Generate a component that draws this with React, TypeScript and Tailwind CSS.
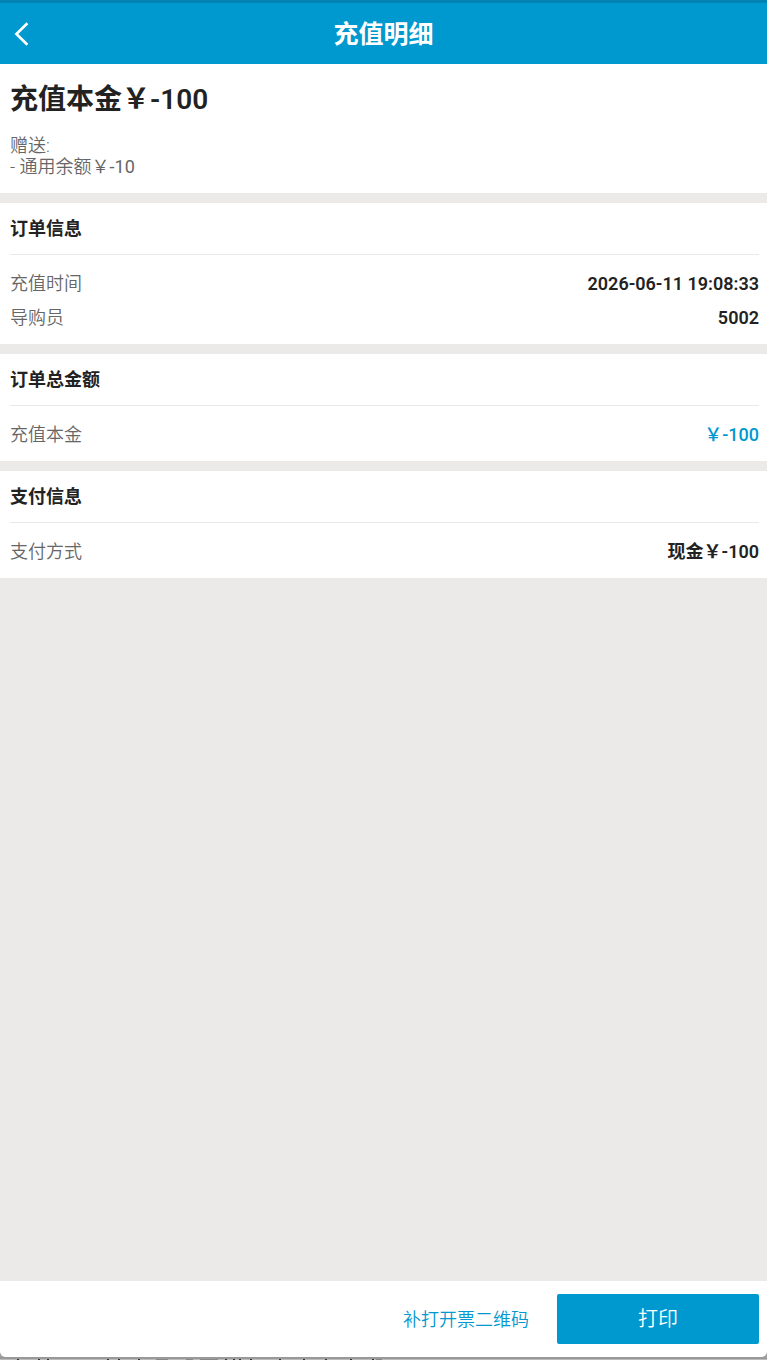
interface DetailRow {
    label: string;
    value: string;
    highlight?: boolean;
}

interface DetailSection {
    title: string;
    rows: DetailRow[];
}

// Full-width yen sign
const YEN = '\uFFE5';

const sections: DetailSection[] = [
    {
        title: '订单信息',
        rows: [
            { label: '充值时间', value: '2026-06-11 19:08:33' },
            { label: '导购员', value: '5002' },
        ],
    },
    {
        title: '订单总金额',
        rows: [{ label: '充值本金', value: `${YEN}-100`, highlight: true }],
    },
    {
        title: '支付信息',
        rows: [{ label: '支付方式', value: `现金${YEN}-100` }],
    },
];

// x positions of the dark marks along the bottom edge
const edgeMarks = [17, 38, 47, 107, 118, 138, 225, 233, 239, 250, 279, 303, 325, 350, 372];

function Section({ title, rows }: DetailSection) {
    return (
        <section className="bg-white pl-[10px] pr-2">
            <h2 className="border-b border-[#e9e9e9] pt-[13px] pb-[13px] text-[18px] leading-[25px] font-semibold text-[#222]">
                {title}
            </h2>
            <dl className="flex flex-col gap-[10px] pt-[17px] pb-[14px] text-[18px] leading-6">
                {rows.map((row) => (
                    <div key={row.label} className="flex items-center justify-between gap-4">
                        <dt className="font-[350] text-[#666]">{row.label}</dt>
                        <dd className={row.highlight ? 'font-medium text-[#0099cf]' : 'font-semibold text-[#222]'}>
                            {row.value}
                        </dd>
                    </div>
                ))}
            </dl>
        </section>
    );
}

export default function App() {
    return (
        <div
            lang="zh-CN"
            className="flex min-h-screen flex-col bg-[#a2a2a2] font-[Roboto,'Noto_Sans_CJK_SC',sans-serif]"
        >
            <div className="flex flex-1 flex-col overflow-hidden rounded-b-md bg-[#ebeae8]">
                {/* Header */}
                <header className="grid grid-cols-[48px_1fr_48px] items-center border-t-3 border-[#0083b0] bg-[#0099cf] text-white">
                    <button type="button" aria-label="返回" className="flex h-[61px] items-center pl-[13px]">
                        <svg width="16" height="24" viewBox="0 0 16 24" fill="none" stroke="currentColor" strokeWidth="2.6">
                            <path d="M14.4 1.2 3.4 12l11 10.8" />
                        </svg>
                    </button>
                    <h1 className="pt-0.5 text-center text-[25px] leading-8 font-semibold">充值明细</h1>
                </header>

                <main className="flex flex-1 flex-col gap-[10px]">
                    {/* Summary */}
                    <section className="bg-white px-[10px] pt-[18px] pb-4">
                        <p className="text-[28px] leading-9 font-semibold text-[#222]">充值本金{YEN}-100</p>
                        <div className="mt-[17px] text-[18px] leading-[21px] font-[350] text-[#666]">
                            <p>赠送:</p>
                            <p>
                                - 通用余额{YEN}
                                <span className="font-normal">-10</span>
                            </p>
                        </div>
                    </section>

                    {sections.map((section) => (
                        <Section key={section.title} {...section} />
                    ))}
                </main>

                {/* Actions */}
                <footer className="flex items-center justify-end bg-white pt-[13px] pr-2 pb-[13px]">
                    <button type="button" className="px-7 pt-px text-[18px] leading-6 font-[350] text-[#0099cf]">
                        补打开票二维码
                    </button>
                    <button
                        type="button"
                        className="h-[50px] w-[202px] rounded-xs bg-[#0099cf] text-[20px] leading-7 font-[350] text-white"
                    >
                        打印
                    </button>
                </footer>
            </div>
            <svg className="block h-[3px] w-full" aria-hidden="true">
                <rect y="0" width="100%" height="2" fill="#999" />
                <rect y="2" width="100%" height="1" fill="#bbb" />
                <path d="M156 2.5h12M186 2.5h7M200 2.5h18M376 2.5h6" stroke="#888" />
                {edgeMarks.map((x) => (
                    <rect key={x} x={x} y="2" width="2" height="1" fill="#333" />
                ))}
            </svg>
        </div>
    );
}
